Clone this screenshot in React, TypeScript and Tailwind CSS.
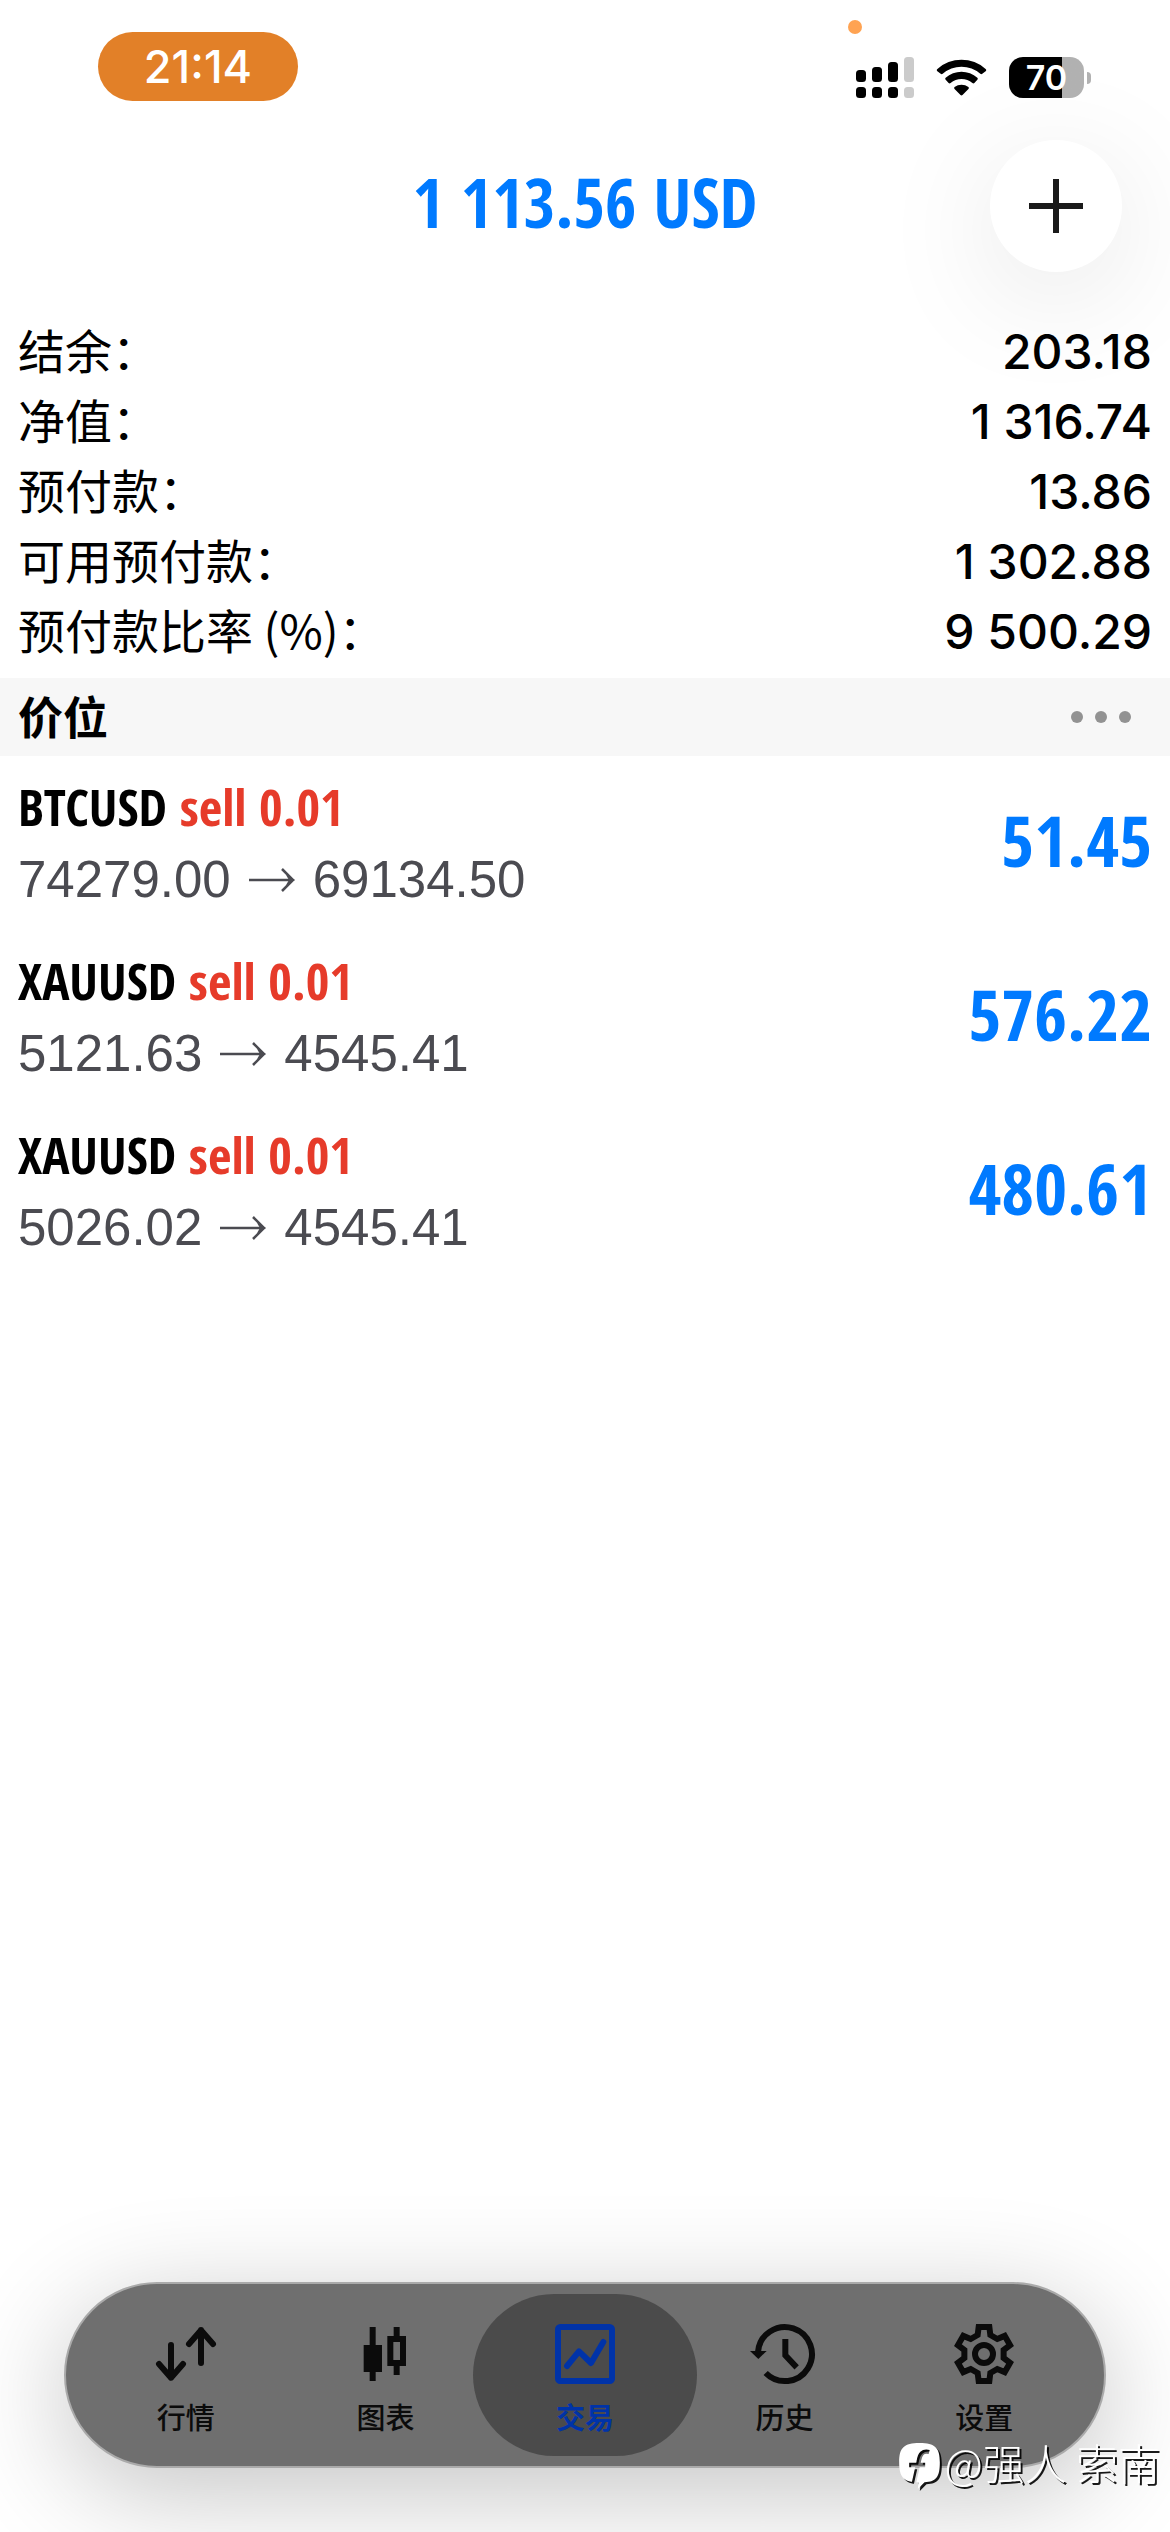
import type { ReactNode } from "react";

const CJK = "font-['Noto_Sans_CJK_SC',sans-serif]";
const INTER = "font-['Inter',sans-serif]";
const CONDENSED = "font-['Open_Sans_Condensed','Roboto_Condensed',sans-serif] font-bold";

const account = [
  { label: "结余：", value: "203.18" },
  { label: "净值：", value: "1 316.74" },
  { label: "预付款：", value: "13.86" },
  { label: "可用预付款：", value: "1 302.88" },
  { label: "预付款比率 (%)：", value: "9 500.29" },
];

const positions = [
  { symbol: "BTCUSD", side: "sell 0.01", open: "74279.00", current: "69134.50", profit: "51.45" },
  { symbol: "XAUUSD", side: "sell 0.01", open: "5121.63", current: "4545.41", profit: "576.22" },
  { symbol: "XAUUSD", side: "sell 0.01", open: "5026.02", current: "4545.41", profit: "480.61" },
];

function SignalIcon() {
  return (
    <svg viewBox="0 0 58 41" className="h-[41px] w-[58px]" aria-hidden="true">
      <rect x="0" y="13" width="10" height="12" rx="3.5" />
      <rect x="16" y="10" width="10" height="15" rx="3.5" />
      <rect x="32" y="5" width="10" height="20" rx="3.5" />
      <rect x="48" y="0" width="10" height="25" rx="3.5" fill="#cbcbcb" />
      <rect x="0" y="30" width="10" height="11" rx="3.5" />
      <rect x="16" y="30" width="10" height="11" rx="3.5" />
      <rect x="32" y="30" width="10" height="11" rx="3.5" />
      <rect x="48" y="30" width="10" height="11" rx="3.5" fill="#cbcbcb" />
    </svg>
  );
}

function WifiIcon() {
  return (
    <svg viewBox="0 0 152 112" className="h-[37px] w-[51px]" aria-hidden="true">
      <path d="M2 36 Q0 33 3 30 A109 109 0 0 1 149 30 Q152 33 150 36 L139 45 Q136 47 133 45 A86 86 0 0 0 19 45 Q16 47 13 45 Z" />
      <path d="M28 63 Q25 60 28 57 A72 72 0 0 1 124 57 Q127 60 124 63 L115 73 Q112 75 109 73 A50 50 0 0 0 43 73 Q40 75 37 73 Z" />
      <path d="M55 91 Q52 88 55 85 A34 34 0 0 1 97 85 Q100 88 97 91 L79 109 Q76 112 73 109 Z" />
    </svg>
  );
}

function Battery() {
  return (
    <div className="flex items-center gap-[3px]" role="img" aria-label="70%">
      <div className="flex h-[41px] w-[75px] items-center justify-center rounded-[14px] bg-linear-to-r from-black from-[71%] to-[#b1b1b1] to-[71%]">
        <span className={`${INTER} text-[34px] leading-none font-semibold text-white`}>70</span>
      </div>
      <div className="h-3 w-1 rounded-r-full bg-[#b1b1b1]" />
    </div>
  );
}

function PriceArrow() {
  return (
    <svg viewBox="0 0 46 24" className="h-6 w-[46px]" fill="none" stroke="currentColor" role="img" aria-label="→">
      <path d="M0 12H42" strokeWidth="2.5" />
      <path d="M33 1L44 12L33 23" strokeWidth="2.5" />
      <path d="M37 7L46 12L37 17L40 12Z" fill="currentColor" stroke="none" />
    </svg>
  );
}

function TabSvg({ children }: { children: ReactNode }) {
  return (
    <svg
      viewBox="0 0 180 180"
      className="size-[60px] overflow-visible"
      fill="none"
      stroke="currentColor"
      strokeWidth="18"
      aria-hidden="true"
    >
      {children}
    </svg>
  );
}

const gearOutline =
  [0, 60, 120, 180, 240, 300]
    .flatMap((deg) => {
      const a = (deg * Math.PI) / 180;
      return [
        [-19, -57],
        [-16, -81],
        [16, -81],
        [19, -57],
      ].map(([x, y]) => `${90 + x * Math.cos(a) - y * Math.sin(a)} ${90 + x * Math.sin(a) + y * Math.cos(a)}`);
    })
    .map((p, i) => (i === 0 ? `M${p}` : `L${p}`))
    .join(" ") + "Z";

const tabs = [
  {
    label: "行情",
    icon: (
      <TabSvg>
        <g strokeLinecap="round" strokeLinejoin="round">
          <path d="M45 63V161M9 120L45 161L81 120" />
          <path d="M135 117V18M99 60L135 19L171 60" />
        </g>
      </TabSvg>
    ),
  },
  {
    label: "图表",
    icon: (
      <TabSvg>
        <path d="M53 9V171" />
        <rect x="26" y="63" width="55" height="81" fill="currentColor" stroke="none" />
        <path d="M125 9V45M125 117V153" />
        <rect x="106" y="45" width="38" height="72" />
      </TabSvg>
    ),
  },
  {
    label: "交易",
    active: true,
    icon: (
      <TabSvg>
        <rect x="9" y="9" width="162" height="162" rx="7" />
        <path d="M36 126L72 82L108 117L145 54" strokeLinecap="round" strokeLinejoin="round" />
      </TabSvg>
    ),
  },
  {
    label: "历史",
    icon: (
      <TabSvg>
        <path d="M9 84A81 81 0 1 1 32 147" />
        <path d="M91 45V94L125 130" />
        <path d="M-15 81H35L10 105Z" fill="currentColor" stroke="none" />
      </TabSvg>
    ),
  },
  {
    label: "设置",
    icon: (
      <TabSvg>
        <path d={gearOutline} />
        <circle cx="90" cy="90" r="27" />
      </TabSvg>
    ),
  },
];

function BubbleLogo() {
  return (
    <svg viewBox="0 0 122 138" className="h-[46px] w-[41px] overflow-visible" aria-hidden="true">
      <defs>
        <mask id="bubble-cut">
          <rect x="-5" y="-5" width="135" height="150" fill="white" />
          <path
            d="M90 27C70 22 62 34 59 54L42 130M30 66H78"
            fill="none"
            stroke="black"
            strokeWidth="13"
          />
        </mask>
      </defs>
      <path
        mask="url(#bubble-cut)"
        fill="white"
        d="M61 0C108 0 122 14 122 58C122 102 112 116 76 118L56 138L58 118C14 118 0 104 0 58C0 14 14 0 61 0Z"
      />
    </svg>
  );
}

export default function App() {
  return (
    <div className="relative flex min-h-screen flex-col overflow-hidden bg-white text-black">
      <header>
        <div className="relative flex h-[140px] items-start justify-between pt-8 pr-[79px] pl-[98px]">
          <time
            className={`${INTER} flex h-[69px] w-[200px] items-center justify-center rounded-full bg-[#e28028] text-[45px] font-medium text-white`}
          >
            21:14
          </time>
          <span className="absolute top-5 right-[308px] size-[14px] rounded-full bg-[#ffa352]" />
          <div className="relative z-10 mt-[25px] flex items-center gap-[22px]">
            <SignalIcon />
            <WifiIcon />
            <Battery />
          </div>
        </div>
        <div className="grid grid-cols-[1fr_auto_1fr] items-center px-12">
          <h1 className={`${CONDENSED} col-start-2 pb-2 text-[68px] leading-none text-[#007aff]`}>1 113.56 USD</h1>
          <button
            type="button"
            aria-label="新订单"
            className="flex size-[132px] items-center justify-center justify-self-end rounded-full bg-white shadow-[0_24px_120px_rgba(0,0,0,0.1)]"
          >
            <svg viewBox="0 0 54 54" className="size-[54px]" stroke="#1a1a1a" strokeWidth="6" aria-hidden="true">
              <path d="M27 0V54M0 27H54" />
            </svg>
          </button>
        </div>
      </header>

      <main className="relative">
        <dl className="px-[18px] pt-[42px] pb-[14px]">
          {account.map((row) => (
            <div key={row.label} className="flex h-[70px] items-baseline justify-between leading-[70px]">
              <dt className={`${CJK} text-[47px]`}>{row.label}</dt>
              <dd className={`${INTER} text-[48px] font-medium`}>{row.value}</dd>
            </div>
          ))}
        </dl>

        <section>
          <div className="flex h-[78px] items-center justify-between bg-[#f7f7f7] pr-[39px] pl-[18px]">
            <h2 className={`${CJK} pb-1 text-[45px] leading-none font-bold`}>价位</h2>
            <button type="button" aria-label="更多" className="flex gap-3">
              <span className="size-3 rounded-full bg-[#929292]" />
              <span className="size-3 rounded-full bg-[#929292]" />
              <span className="size-3 rounded-full bg-[#929292]" />
            </button>
          </div>
          <ul>
            {positions.map((p) => (
              <li key={p.open} className="flex h-[174px] items-center justify-between px-[18px]">
                <div className="leading-[74px]">
                  <p className={`${CONDENSED} text-[51px]`}>
                    {p.symbol} <span className="text-[#e63b2a]">{p.side}</span>
                  </p>
                  <p className="flex items-center gap-[18px] font-['Liberation_Sans',sans-serif] text-[51px] text-[#4b4b51]">
                    <span>{p.open}</span>
                    <PriceArrow />
                    <span>{p.current}</span>
                  </p>
                </div>
                <p className={`${CONDENSED} pb-2 text-[71px] leading-none text-[#007aff]`}>{p.profit}</p>
              </li>
            ))}
          </ul>
        </section>
      </main>

      <nav className="mx-16 mt-auto mb-16 flex h-[186px] rounded-full border-2 border-[#aaaaaa] bg-[#6f6f6f] px-5 shadow-[0_24px_110px_rgba(0,0,0,0.24)]">
        {tabs.map((tab) => (
          <button
            key={tab.label}
            type="button"
            aria-current={tab.active ? "page" : undefined}
            className={`relative flex flex-1 flex-col items-center pt-10 ${tab.active ? "text-[#0033a8]" : "text-[#0b0b0b]"}`}
          >
            {tab.active && <span className="absolute -inset-x-3 inset-y-[10px] rounded-full bg-[#4b4b4b]" />}
            <span className="relative">{tab.icon}</span>
            <span className={`${CJK} relative mt-3 text-[29px] leading-10 ${tab.active ? "font-bold" : "font-medium"}`}>
              {tab.label}
            </span>
          </button>
        ))}
      </nav>

      <div className="absolute right-[10px] bottom-9 flex h-[60px] items-center gap-1 drop-shadow-[2px_2px_0_rgba(0,0,0,0.9)]">
        <BubbleLogo />
        <span className={`${CJK} pb-2 text-[42px] leading-none font-light text-white`}>@强人 索南</span>
      </div>
    </div>
  );
}
